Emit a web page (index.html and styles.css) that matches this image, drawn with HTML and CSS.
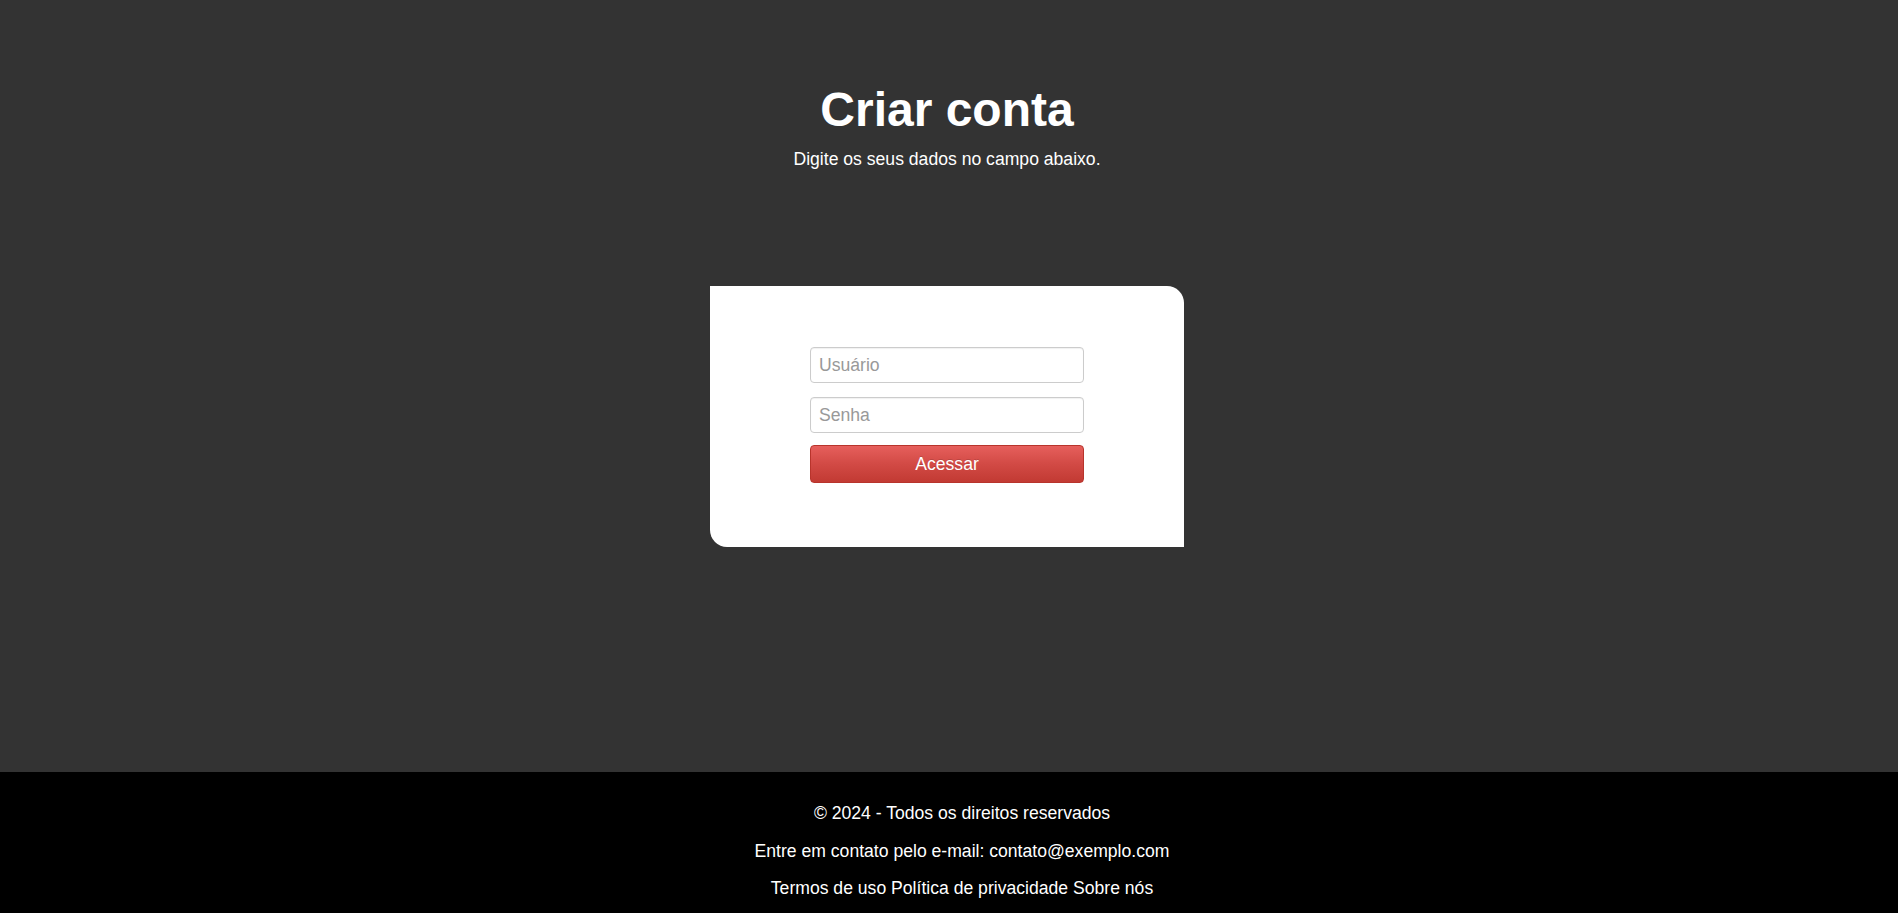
FILE: index.html
```html
<!DOCTYPE html>
<html lang="pt-BR">
<head>
<meta charset="utf-8">
<title>Criar conta</title>
<link rel="stylesheet" href="styles.css">
</head>
<body>
<main class="main">
  <header class="header">
    <h1 class="title">Criar conta</h1>
    <p class="subtitle">Digite os seus dados no campo abaixo.</p>
  </header>
  <section class="card">
    <form class="form">
      <input class="field field-user" type="text" placeholder="Usuário">
      <input class="field field-pass" type="password" placeholder="Senha">
      <button class="btn" type="button">Acessar</button>
    </form>
  </section>
</main>
<footer class="footer">
  <p class="footer-line">© 2024 - Todos os direitos reservados</p>
  <p class="footer-line">Entre em contato pelo e-mail: contato@exemplo.com</p>
  <p class="footer-line">Termos de uso Política de privacidade Sobre nós</p>
</footer>
</body>
</html>
```
FILE: styles.css
```css
html, body {
  margin: 0;
  padding: 0;
}
body {
  background: #333333;
  font-family: "Liberation Sans", Arial, sans-serif;
  color: #ffffff;
}
.main {
  height: 772px;
  box-sizing: border-box;
  padding-top: 82px;
  display: flex;
  flex-direction: column;
  align-items: center;
}
.header {
  text-align: center;
  margin-right: 4px;
}
.title {
  margin: 0;
  font-size: 48px;
  line-height: 55px;
  font-weight: bold;
}
.subtitle {
  margin: 12px 0 0;
  font-size: 17.6px;
  line-height: 20px;
}
.card {
  margin-top: 117px;
  margin-left: -4px;
  width: 474px;
  height: 261px;
  box-sizing: border-box;
  background: #ffffff;
  border-radius: 0 17px 0 17px;
  padding: 61px 100px 0;
}
.form {
  display: flex;
  flex-direction: column;
}
.field {
  height: 36px;
  box-sizing: border-box;
  border: 1px solid #cccccc;
  border-radius: 4px;
  padding: 0 8px;
  font-family: "Liberation Sans", Arial, sans-serif;
  font-size: 17.6px;
  color: #555555;
  background: #ffffff;
  box-shadow: inset 0 1px 1px rgba(0, 0, 0, 0.06);
  outline: none;
}
.field::placeholder {
  color: #999999;
}
.field-user {
  margin-bottom: 14px;
}
.field-pass {
  margin-bottom: 12px;
}
.btn {
  height: 38px;
  border: 1px solid #b8342c;
  border-radius: 4px;
  background: linear-gradient(to bottom, #e65f5c 0%, #d24a45 50%, #c23a33 100%);
  color: #ffffff;
  font-family: "Liberation Sans", Arial, sans-serif;
  font-size: 17.6px;
  cursor: pointer;
  padding: 0;
  text-shadow: 0 -1px 0 rgba(0, 0, 0, 0.15);
}
.footer {
  background: #000000;
  height: 141px;
  box-sizing: border-box;
  padding: 14px 0 0 26px;
  text-align: center;
  overflow: hidden;
}
.footer-line {
  margin: 17.4px 0;
  font-size: 17.6px;
  line-height: 20px;
}
```
